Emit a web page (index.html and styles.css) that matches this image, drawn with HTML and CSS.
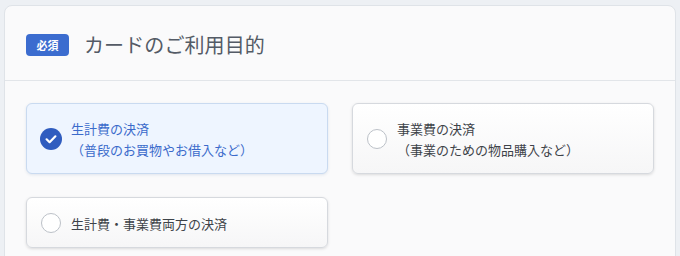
FILE: index.html
```html
<!DOCTYPE html>
<html lang="ja">
<head>
<meta charset="utf-8">
<link rel="stylesheet" href="styles.css">
</head>
<body>
<section class="card">
  <header class="card-head">
    <span class="badge">必須</span>
    <h2 class="title">カードのご利用目的</h2>
  </header>
  <div class="card-body">
    <div class="options">
      <label class="option selected">
        <span class="mark">
          <svg viewBox="0 0 22 22" width="22" height="22"><circle cx="11" cy="11" r="11" fill="#2f5cbf"/><path d="M6.6 11.3 L9.6 14.2 L15.4 8.3" fill="none" stroke="#fff" stroke-width="2.2" stroke-linecap="round" stroke-linejoin="round"/></svg>
        </span>
        <span class="label">生計費の決済<br>（普段のお買物やお借入など）</span>
      </label>
      <label class="option">
        <span class="mark"><span class="radio"></span></span>
        <span class="label">事業費の決済<br>（事業のための物品購入など）</span>
      </label>
      <label class="option">
        <span class="mark"><span class="radio"></span></span>
        <span class="label">生計費・事業費両方の決済</span>
      </label>
    </div>
  </div>
</section>
</body>
</html>
```
FILE: styles.css
```css
html, body {
  margin: 0;
  padding: 0;
}
body {
  background: #edf0f4;
  font-family: "Noto Sans CJK JP", "Noto Sans", sans-serif;
  padding: 5px 4px 0;
  height: 256px;
  box-sizing: border-box;
  overflow: hidden;
}
.card {
  background: #fafafb;
  border: 1px solid #dfe3e8;
  border-radius: 8px;
  height: 300px;
}
.card-head {
  height: 75px;
  border-bottom: 1px solid #e2e5e9;
  display: flex;
  align-items: center;
  padding: 3px 21px 0;
  box-sizing: border-box;
  gap: 15px;
}
.badge {
  display: inline-flex;
  align-items: center;
  justify-content: center;
  width: 43px;
  height: 22px;
  border-radius: 4px;
  background: #3b6ccf;
  color: #fff;
  font-size: 11px;
  font-weight: 700;
}
.title {
  margin: 0;
  font-size: 20px;
  font-weight: 400;
  color: #545b66;
  letter-spacing: 0.1px;
}
.card-body {
  padding: 22px 21px 21px;
}
.options {
  display: grid;
  grid-template-columns: 1fr 1fr;
  gap: 23px 24px;
}
.option {
  display: flex;
  align-items: center;
  gap: 9px;
  padding: 14px 12px 13px 13px;
  border: 1px solid #d6d9de;
  border-radius: 6px;
  background: linear-gradient(#ffffff, #f6f6f7);
  box-shadow: 0 1px 3px rgba(0, 0, 0, 0.13);
  font-size: 13px;
  line-height: 21px;
  color: #3e4349;
}
.option.selected {
  background: #eef5ff;
  border-color: #c9daf0;
  color: #3b6bcb;
  box-shadow: 0 1px 3px rgba(40, 80, 140, 0.12);
}
.mark {
  width: 22px;
  height: 22px;
  flex: none;
  display: flex;
  align-items: center;
  justify-content: center;
}
.mark svg {
  display: block;
}
.radio {
  width: 18px;
  height: 18px;
  border-radius: 50%;
  border: 1.5px solid #bcc1c8;
  background: #fff;
}
.label {
  display: block;
}
```
